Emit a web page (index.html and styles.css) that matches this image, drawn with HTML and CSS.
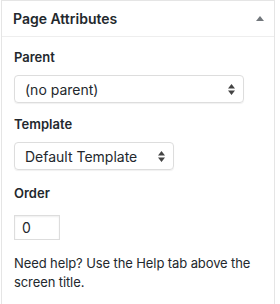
FILE: index.html
```html
<!DOCTYPE html>
<html lang="en">
<head>
  <meta charset="UTF-8" />
  <title>Page Attributes</title>
  <link rel="stylesheet" href="styles.css">
</head>
<body>
  <div class="postbox">
    <div class="postbox-header">
      <h2>Page Attributes</h2>
      <span class="toggle-arrow"></span>
    </div>

    <div class="inside">
      <p class="attr-label first">Parent</p>
      <div class="select-box select-wide">
        <span>(no parent)</span>
        <svg class="updown" width="7" height="11" viewBox="0 0 7 11"><path d="M3.5 0 L7 4.5 L0 4.5 Z M3.5 11 L7 6.5 L0 6.5 Z" fill="#444"/></svg>
      </div>

      <p class="attr-label">Template</p>
      <div class="select-box select-narrow">
        <span>Default Template</span>
        <svg class="updown" width="7" height="11" viewBox="0 0 7 11"><path d="M3.5 0 L7 4.5 L0 4.5 Z M3.5 11 L7 6.5 L0 6.5 Z" fill="#444"/></svg>
      </div>

      <p class="attr-label order-label">Order</p>
      <div class="order-input">0</div>

      <p class="help">Need help? Use the Help tab above the screen title.</p>
    </div>
  </div>
</body>
</html>
```

FILE: styles.css
```css
html, body {
  margin: 0;
  padding: 0;
  background: #fff;
  height: 100%;
}

body {
  font-family: Inter, "Open Sans", Roboto, sans-serif;
  color: #23282d;
  font-size: 13px;
}

.postbox {
  margin-left: 1px;
  width: 272px;
  height: 100%;
  border: 1px solid #e5e5e5;
  border-bottom: none;
  box-sizing: content-box;
}

.postbox-header {
  display: flex;
  justify-content: space-between;
  align-items: center;
  height: 35px;
  border-bottom: 1px solid #eee;
  padding: 0 10px 0 11px;
}

.postbox-header h2 {
  margin: 0;
  font-size: 14px;
  font-weight: 600;
  color: #23282d;
}

.toggle-arrow {
  width: 0;
  height: 0;
  border-left: 4px solid transparent;
  border-right: 4px solid transparent;
  border-bottom: 5px solid #72777c;
}

.inside {
  padding: 0 12px;
}

.attr-label {
  margin: 12px 0 0;
  font-weight: 600;
  line-height: 19px;
}

.attr-label.first {
  margin-top: 11px;
}

.attr-label.order-label {
  margin-top: 14px;
}

.select-box {
  display: flex;
  justify-content: space-between;
  align-items: center;
  height: 28px;
  margin-top: 8px;
  padding: 0 8px 0 10px;
  border: 1px solid #ddd;
  border-radius: 4px;
  box-shadow: 0 1px 1px rgba(0, 0, 0, 0.06);
  box-sizing: border-box;
  font-size: 14px;
}

.select-wide {
  width: 230px;
}

.select-narrow {
  width: 160px;
}

.order-input {
  width: 46px;
  height: 25px;
  margin-top: 12px;
  padding-left: 7px;
  border: 1px solid #ddd;
  box-shadow: inset 0 1px 2px rgba(0, 0, 0, 0.07);
  box-sizing: border-box;
  font-size: 14px;
  line-height: 23px;
}

.help {
  margin: 14px 0 0;
  line-height: 19px;
  letter-spacing: -0.1px;
}
```
